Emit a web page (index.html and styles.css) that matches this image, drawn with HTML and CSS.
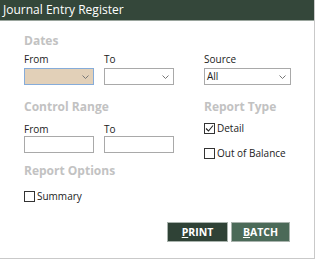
FILE: index.html
```html
<!DOCTYPE html>
<html>
<head>
<meta charset="utf-8">
<link rel="stylesheet" href="styles.css">
</head>
<body>
<div class="dialog">
  <div class="titlebar">Journal Entry Register</div>
  <div class="content">
    <div class="grid">
      <div class="heading span2">Dates</div>
      <div class="label first">From</div>
      <div class="label">To</div>
      <div class="label">Source</div>
      <div class="select focus"><span class="val"></span><svg class="chev" width="7" height="4" viewBox="0 0 7 4"><polyline points="0.5,0.5 3.5,3.5 6.5,0.5" fill="none" stroke="#777" stroke-width="1"/></svg></div>
      <div class="select"><span class="val"></span><svg class="chev" width="7" height="4" viewBox="0 0 7 4"><polyline points="0.5,0.5 3.5,3.5 6.5,0.5" fill="none" stroke="#777" stroke-width="1"/></svg></div>
      <div class="select wide"><span class="val">All</span><svg class="chev" width="7" height="4" viewBox="0 0 7 4"><polyline points="0.5,0.5 3.5,3.5 6.5,0.5" fill="none" stroke="#777" stroke-width="1"/></svg></div>

      <div class="heading span2 sec">Control Range</div>
      <div class="heading sec">Report Type</div>
      <div class="label sub">From</div>
      <div class="label sub">To</div>
      <div class="checks">
        <label class="check"><span class="box"><svg width="9" height="9" viewBox="0 0 9 9"><polyline points="1,4.5 3.5,7 8,1.5" fill="none" stroke="#222" stroke-width="1.1"/></svg></span>Detail</label>
        <label class="check"><span class="box"></span>Out of Balance</label>
      </div>
      <div class="input"></div>
      <div class="input"></div>
    </div>
    <div class="options">
      <div class="heading">Report Options</div>
      <label class="check"><span class="box"></span>Summary</label>
    </div>
    <div class="actions">
      <button class="btn dark"><u>P</u>RINT</button>
      <button class="btn light"><u>B</u>ATCH</button>
    </div>
  </div>
</div>
</body>
</html>
```

FILE: styles.css
```css
html, body {
  margin: 0;
  padding: 0;
  background: #ffffff;
}
body {
  font-family: "Open Sans", "Noto Sans", sans-serif;
  color: #222;
}
.dialog {
  width: 315px;
  height: 259px;
  border-right: 1px solid #c9c9c9;
  border-bottom: 1px solid #c9c9c9;
  box-sizing: border-box;
  display: flex;
  flex-direction: column;
}
.titlebar {
  height: 20px;
  background: #34473a;
  color: #fff;
  font-size: 12px;
  line-height: 20px;
  padding-left: 3px;
  border-bottom: 1px solid #9aa59d;
}
.content {
  padding: 12px 0 0 24px;
  display: flex;
  flex-direction: column;
  flex: 1;
}
.grid {
  display: grid;
  grid-template-columns: 80px 100px 87px;
  grid-template-rows: 20px 15px 17px 30px 21px 17px;
}
.span2 { grid-column: span 2; }
.first { grid-column-start: 1; }
.heading {
  font-size: 12px;
  font-weight: 700;
  color: #c2c2c2;
  line-height: 16px;
}
.heading.sec { align-self: end; }
.label {
  font-size: 10px;
  line-height: 13px;
}
.label.sub { align-self: end; }
.select, .input {
  width: 70px;
  height: 17px;
  box-sizing: border-box;
  border: 1px solid #a9a9a9;
  background: #fff;
  display: flex;
  align-items: center;
  justify-content: space-between;
  padding: 0 4px 0 2px;
}
.select.focus {
  background: #e2d0b8;
  border-color: #86acd9;
}
.select.wide { width: 87px; }
.val { font-size: 10px; line-height: 13px; }
.chev { display: block; }
.checks {
  grid-row: span 2;
  display: flex;
  flex-direction: column;
  gap: 12px;
  padding-top: 7px;
}
.check {
  display: flex;
  align-items: center;
  font-size: 10px;
  line-height: 13px;
  gap: 2px;
}
.box {
  width: 11px;
  height: 11px;
  box-sizing: border-box;
  border: 1px solid #333;
  background: #fff;
  display: flex;
  align-items: center;
  justify-content: center;
}
.options {
  margin-top: 10px;
  display: flex;
  flex-direction: column;
  gap: 11px;
}
.actions {
  display: flex;
  gap: 3px;
  margin-top: 19px;
  padding-left: 143px;
}
.btn {
  height: 20px;
  border: 1px solid #a9b3ad;
  color: #fff;
  font-family: "Open Sans", sans-serif;
  font-size: 10.5px;
  font-weight: 700;
  padding: 0;
}
.btn.dark { background: #2f4236; width: 61px; }
.btn.light { background: #4b6a58; width: 59px; }
```
